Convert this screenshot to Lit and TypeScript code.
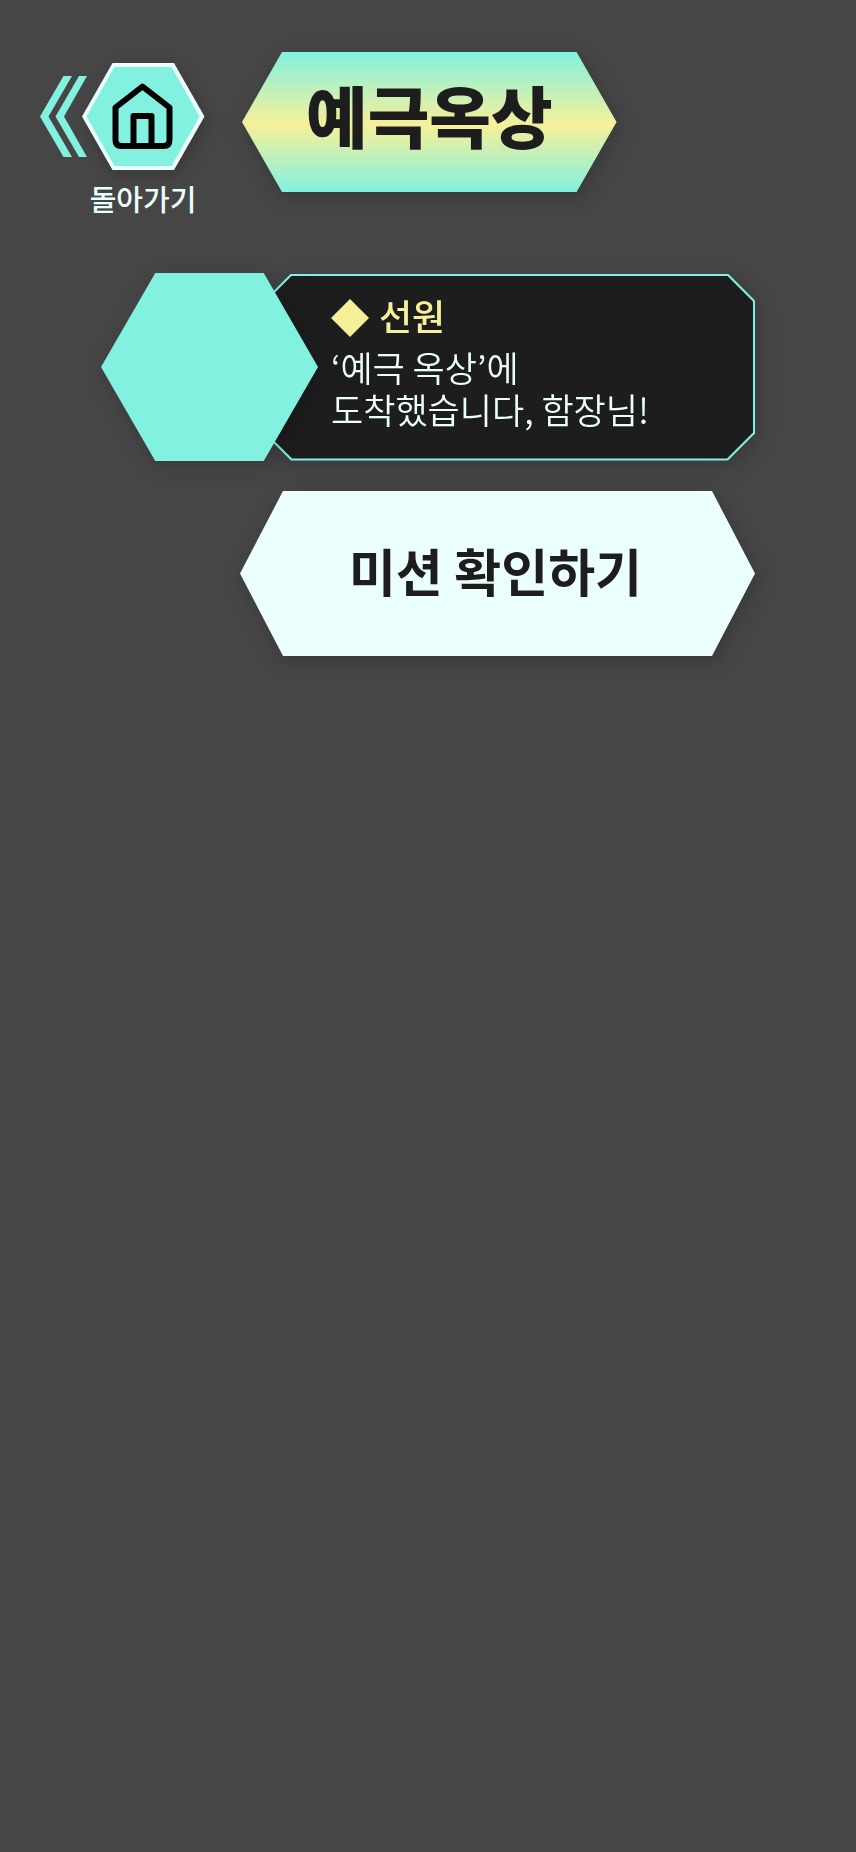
import { LitElement, html, css } from "lit";
import { customElement, property } from "lit/decorators.js";

@customElement("back-link")
class BackLink extends LitElement {
  @property() label = "";

  static styles = css`
    :host {
      display: block;
    }
    .link {
      display: flex;
      align-items: flex-start;
      color: #ebfffd;
      text-decoration: none;
    }
    .chevrons {
      flex: none;
      margin: 13px -5px 0 0;
    }
    .target {
      display: flex;
      flex-direction: column;
      align-items: center;
      gap: 6px;
      width: 122px;
    }
    .badge {
      display: block;
      overflow: visible;
      filter: drop-shadow(3px 5px 8px rgba(0, 0, 0, 0.2));
    }
    .label {
      font-size: 29px;
      font-weight: 500;
      line-height: 44px;
      white-space: nowrap;
    }
  `;

  render() {
    return html`
      <a class="link" href="#home">
        <svg class="chevrons" width="47" height="81" viewBox="0 0 47 81" fill="#82f1df" aria-hidden="true">
          <path d="M23.5 0H32L8.5 40.5L32 81H23.5L0 40.5Z" />
          <path d="M39 0H47L24 40.5L47 81H39L15.5 40.5Z" />
        </svg>
        <span class="target">
          <svg class="badge" width="122" height="107" viewBox="0 0 122 107" aria-hidden="true">
            <path d="M30.5 0H92L122.500 53.500L92 107H30.5L0 53.500Z" fill="#ebfffd" />
            <path d="M32.500 4H89.500L117.500 53.500L89.500 103H32.500L4.500 53.500Z" fill="#82f1df" />
            <g fill="none" stroke="#000" stroke-width="6" stroke-linejoin="round">
              <path d="M33.500 44.500L60.500 23.500L87.500 44.500V77Q87.500 83 81.500 83H39.500Q33.500 83 33.500 77Z" />
              <path d="M51.500 83V53H69.500V83" />
            </g>
          </svg>
          <span class="label">${this.label}</span>
        </span>
      </a>
    `;
  }
}

@customElement("crew-message")
class CrewMessage extends LitElement {
  @property() speaker = "";

  static styles = css`
    :host {
      display: flex;
      align-items: center;
    }
    .portrait {
      position: relative;
      z-index: 1;
      flex: none;
      margin-right: -54px;
      filter: drop-shadow(3px 5px 10px rgba(0, 0, 0, 0.2));
    }
    .portrait-shape {
      width: 217px;
      height: 188px;
      background: #82f1df;
      clip-path: polygon(25% 0, 75% 0, 100% 50%, 75% 100%, 25% 100%, 0 50%);
    }
    .panel {
      flex: 1;
      min-width: 0;
      filter: drop-shadow(3px 5px 10px rgba(0, 0, 0, 0.2));
    }
    .frame,
    .body {
      clip-path: polygon(
        var(--cut) 0,
        calc(100% - var(--cut)) 0,
        100% var(--cut),
        100% calc(100% - var(--cut)),
        calc(100% - var(--cut)) 100%,
        var(--cut) 100%,
        0 calc(100% - var(--cut)),
        0 var(--cut)
      );
    }
    .frame {
      --cut: 27px;
      padding: 2px;
      background: #82f1df;
    }
    .body {
      --cut: 26px;
      padding: 17px 24px 29px 65px;
      background: #1d1d1d;
      color: #ebfffd;
    }
    .speaker {
      display: flex;
      align-items: flex-end;
      gap: 10px;
      margin: 0 0 9px;
      color: #f7f09a;
      font-size: 36px;
      font-weight: 500;
      line-height: 44px;
    }
    .text {
      margin: 0;
      font-size: 35px;
      font-weight: 350;
      line-height: 42px;
    }
  `;

  render() {
    return html`
      <div class="portrait"><div class="portrait-shape"></div></div>
      <div class="panel">
        <div class="frame">
          <div class="body">
            <h2 class="speaker">
              <svg width="38" height="38" viewBox="0 0 38 38" aria-hidden="true">
                <path d="M19 0L38 19L19 38L0 19Z" fill="#f7f09a" />
              </svg>
              ${this.speaker}
            </h2>
            <p class="text"><slot></slot></p>
          </div>
        </div>
      </div>
    `;
  }
}

@customElement("app-root")
class AppRoot extends LitElement {
  static styles = css`
    :host {
      display: block;
      box-sizing: border-box;
      min-height: 100vh;
      padding: 52px 40px;
      background: #464646;
      font-family: "Noto Sans CJK KR", sans-serif;
    }
    .header {
      display: flex;
      align-items: flex-start;
      gap: 38px;
    }
    .back {
      margin-top: 11px;
    }
    .title-shadow,
    .action-shadow {
      filter: drop-shadow(3px 5px 10px rgba(0, 0, 0, 0.2));
    }
    .title {
      margin: 0;
      padding: 14px 64px 30px;
      background: linear-gradient(#82f1df, #f7f09a 52%, #82f1df);
      clip-path: polygon(40px 0, calc(100% - 40px) 0, 100% 50%, calc(100% - 40px) 100%, 40px 100%, 0 50%);
      color: #1d1d1d;
      font-size: 67px;
      font-weight: 900;
      line-height: 96px;
      white-space: nowrap;
    }
    .content {
      display: flex;
      flex-direction: column;
      gap: 30px;
      margin: 53px 61px 0;
    }
    .action-shadow {
      display: flex;
      margin-left: 139px;
    }
    .action {
      flex: 1;
      padding: 39px 64px 46px 60px;
      border: 0;
      background: #ebfffd;
      clip-path: polygon(43px 0, calc(100% - 43px) 0, 100% 50%, calc(100% - 43px) 100%, 43px 100%, 0 50%);
      color: #1d1d1d;
      font-family: inherit;
      font-size: 51px;
      font-weight: 700;
      line-height: 80px;
      white-space: nowrap;
      cursor: pointer;
    }
  `;

  render() {
    return html`
      <header class="header">
        <back-link class="back" label="돌아가기"></back-link>
        <div class="title-shadow"><h1 class="title">예극옥상</h1></div>
      </header>
      <main class="content">
        <crew-message speaker="선원">‘예극 옥상’에<br />도착했습니다, 함장님!</crew-message>
        <div class="action-shadow"><button class="action" type="button">미션 확인하기</button></div>
      </main>
    `;
  }
}
